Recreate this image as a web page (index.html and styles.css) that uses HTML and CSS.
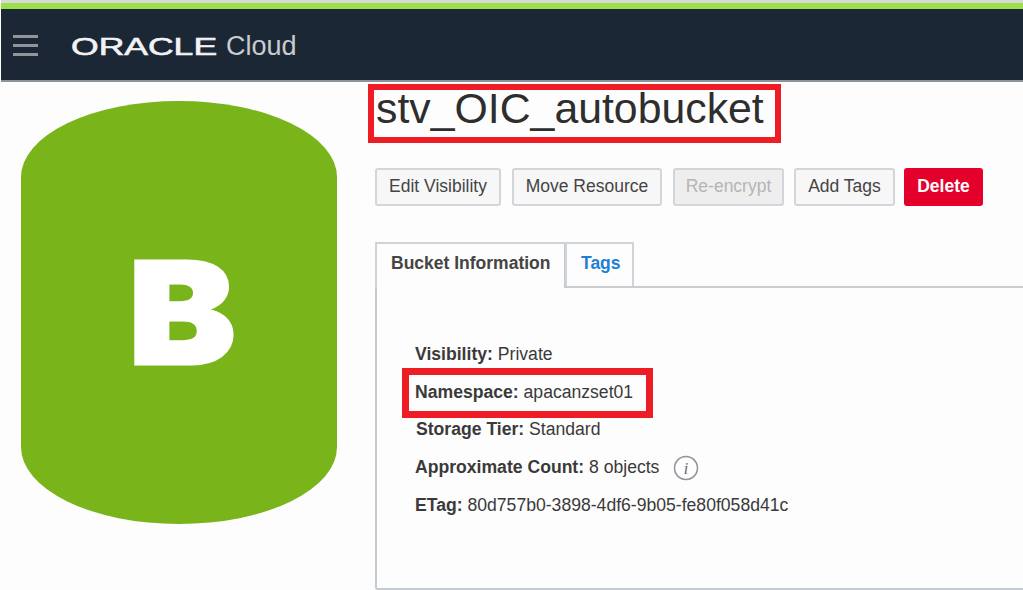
FILE: index.html
```html
<!DOCTYPE html>
<html lang="en">
<head>
  <meta charset="UTF-8">
  <meta name="viewport" content="width=device-width, initial-scale=1.0">
  <title>stv_OIC_autobucket</title>
  <link rel="stylesheet" href="styles.css">
</head>
<body>

  <header class="topbar">
    <div class="hamburger"><span></span><span></span><span></span></div>
    <div class="brand">
      <span class="brand-oracle">ORACLE</span>
      <span class="brand-cloud">Cloud</span>
    </div>
  </header>

  <main class="page">
    <div class="bucket-side">
      <svg class="bucket-icon" width="316" height="423" viewBox="0 0 316 423">
        <path fill="#78b41a" d="M0 76A158 76 0 0 1 316 76V346A158 77 0 0 1 0 346Z"/>
        <text class="bucket-letter" transform="translate(161 263) scale(1.13 1)" text-anchor="middle">B</text>
      </svg>
    </div>

    <div class="detail">
      <h1 class="title">stv_OIC_autobucket</h1>

      <div class="actions">
        <button class="btn btn-edit">Edit Visibility</button>
        <button class="btn btn-move">Move Resource</button>
        <button class="btn btn-encrypt" disabled>Re-encrypt</button>
        <button class="btn btn-tags">Add Tags</button>
        <button class="btn btn-delete">Delete</button>
      </div>

      <div class="tabs">
        <div class="tab tab-active">Bucket Information</div>
        <div class="tab tab-link">Tags</div>
      </div>

      <div class="panel">
        <div class="info-row"><b>Visibility:</b> Private</div>
        <div class="info-row info-marked"><b>Namespace:</b> apacanzset01</div>
        <div class="info-row info-storage"><b>Storage Tier:</b> Standard</div>
        <div class="info-row">
          <b>Approximate Count:</b> 8 objects
          <svg class="info-icon" width="26" height="26" viewBox="0 0 26 26">
            <circle cx="13" cy="13" r="11.5" fill="none" stroke="#8d9399" stroke-width="1.5"/>
            <text x="13" y="18.5" text-anchor="middle" class="info-i">i</text>
          </svg>
        </div>
        <div class="info-row"><b>ETag:</b> 80d757b0-3898-4df6-9b05-fe80f058d41c</div>
      </div>
    </div>
  </main>

</body>
</html>
```

FILE: styles.css
```css
html, body {
  margin: 0;
  padding: 0;
}

body {
  width: 1023px;
  height: 590px;
  overflow: hidden;
  background: #fdfdfd;
  font-family: 'Liberation Sans', Arial, sans-serif;
  color: #3a3a3a;
}

.topbar {
  height: 71px;
  margin-left: 1px;
  background: #1c2735;
  border-top: 6px solid #9ae04a;
  border-bottom: 2px solid #8d9499;
  box-shadow: 0 -3px 0 #d8d8d8;
  margin-top: 3px;
  display: flex;
  align-items: center;
}

.hamburger {
  width: 25px;
  margin-left: 12px;
  margin-top: 2px;
  display: flex;
  flex-direction: column;
  gap: 6px;
}

.hamburger span {
  height: 3px;
  background: #8f959b;
}

.brand {
  margin-left: 33px;
  margin-top: 4px;
  display: flex;
  align-items: baseline;
  color: #f2f3f4;
}

.brand-oracle {
  width: 155px;
  font-size: 24px;
  font-weight: normal;
  -webkit-text-stroke: 0.6px #f2f3f4;
  display: inline-block;
  transform: scaleX(1.48);
  transform-origin: left;
}

.brand-cloud {
  font-size: 27px;
  color: #c9cccf;
}

.page {
  display: flex;
  height: 509px;
}

.bucket-side {
  width: 375px;
  padding: 19px 0 0 21px;
  box-sizing: border-box;
}

.bucket-letter {
  font-family: Inter, 'Liberation Sans', sans-serif;
  font-size: 142px;
  font-weight: 900;
  fill: #ffffff;
  stroke: #ffffff;
  stroke-width: 3px;
}

.detail {
  flex: 1;
  display: flex;
  flex-direction: column;
}

.title {
  width: 413px;
  height: 59px;
  box-sizing: border-box;
  margin: 2px 0 0 -7px;
  padding-left: 2px;
  border: 6px solid #ee1c25;
  font-size: 42.8px;
  font-weight: normal;
  line-height: 36px;
  color: #2e2e2e;
  white-space: nowrap;
}

.actions {
  display: flex;
  margin-top: 25px;
  gap: 11px;
}

.btn {
  height: 38px;
  padding: 0 0 2px;
  font-family: inherit;
  font-size: 17.5px;
  color: #444;
  background: #f7f7f7;
  border: 2px solid #d2d6da;
  border-radius: 3px;
}

.btn-edit { width: 126px; }
.btn-move { width: 150px; }
.btn-encrypt { width: 111px; color: #b5b5b5; background: #eeeeee; margin-right: -1px; }
.btn-tags { width: 101px; margin-right: -2px; }

.btn-delete {
  width: 79px;
  color: #fff;
  font-weight: bold;
  background: #e4002b;
  border-color: #e4002b;
}

.tabs {
  display: flex;
  margin-top: 36px;
  position: relative;
  z-index: 1;
}

.tab {
  height: 44px;
  box-sizing: border-box;
  padding: 0 14px;
  font-size: 17.5px;
  line-height: 38px;
  background: #fdfdfd;
  border: 2px solid #d0d4d9;
  border-bottom: none;
  white-space: nowrap;
}

.tab-active {
  width: 191px;
  height: 46px;
  font-weight: bold;
  color: #444;
  margin-bottom: -2px;
  border-right-color: #c4cad0;
}

.tab-link {
  width: 69px;
  margin-left: -1px;
  font-weight: bold;
  color: #1f7fd6;
}

.panel {
  flex: 1;
  margin-bottom: 1px;
  padding: 48px 0 0 38px;
  border-top: 2px solid #c9ced3;
  border-left: 2px solid #c4cad0;
  border-bottom: 2px solid #c4cad0;
  border-radius: 0 0 0 3px;
}

.info-row {
  height: 37.5px;
  font-size: 17.6px;
  line-height: 37px;
  white-space: nowrap;
}

.info-row b {
  color: #3a3a3a;
}

.info-marked {
  width: 251px;
  height: 50px;
  margin: -6px 0 -6px -13px;
  padding-left: 6px;
  border: 7px solid #ee1c25;
  box-sizing: border-box;
  line-height: 34px;
}

.info-storage {
  padding-left: 1px;
  line-height: 35px;
}

.info-icon {
  margin-left: 9px;
  vertical-align: middle;
}

.info-i {
  font-family: 'Liberation Serif', serif;
  font-style: italic;
  font-size: 16px;
  fill: #666;
}
```
